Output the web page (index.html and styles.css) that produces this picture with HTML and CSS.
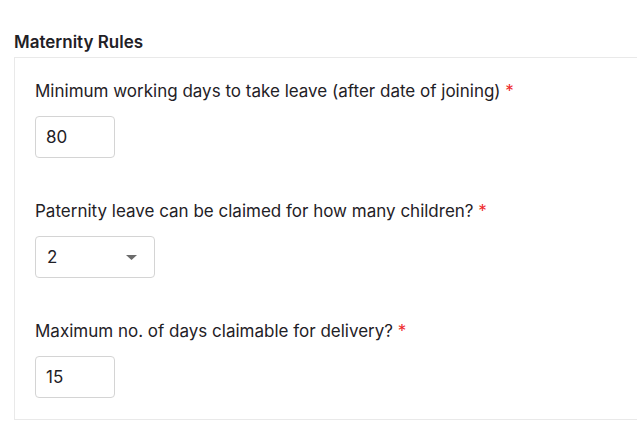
FILE: index.html
```html
<!DOCTYPE html>
<html>
<head>
<meta charset="utf-8">
<link rel="stylesheet" href="styles.css">
</head>
<body>
<div class="page">
  <h2 class="title">Maternity Rules</h2>
  <div class="card">
    <div class="field">
      <label class="label">Minimum working days to take leave (after date of joining) <span class="req">*</span></label>
      <div class="input">80</div>
    </div>
    <div class="field">
      <label class="label">Paternity leave can be claimed for how many children? <span class="req">*</span></label>
      <div class="select"><span>2</span><svg class="caret" width="11" height="5" viewBox="0 0 11 5"><path d="M0 0H11L5.5 5Z" fill="#6b6b6b"/></svg></div>
    </div>
    <div class="field">
      <label class="label">Maximum no. of days claimable for delivery? <span class="req">*</span></label>
      <div class="input">15</div>
    </div>
  </div>
</div>
</body>
</html>
```
FILE: styles.css
```css
html, body {
  margin: 0;
  padding: 0;
  background: #fff;
}
body {
  font-family: Inter, "Noto Sans", sans-serif;
  color: #1f2126;
}
.page {
  padding: 30px 0 0 14px;
}
.title {
  margin: 0 0 3px 0;
  font-size: 17px;
  line-height: 24px;
  font-weight: 600;
}
.card {
  border: 1px solid #e9e9e9;
  border-right: 0;
  padding: 21px 20px 21px 20px;
  display: flex;
  flex-direction: column;
  gap: 41px;
}
.field {
  display: flex;
  flex-direction: column;
  align-items: flex-start;
  gap: 13px;
}
.label {
  font-size: 17px;
  line-height: 24px;
}
.req {
  color: #ee2a2a;
}
.input, .select {
  box-sizing: border-box;
  height: 42px;
  border: 1px solid #d4d4d4;
  border-radius: 4px;
  font-size: 17px;
  display: flex;
  align-items: center;
  padding-left: 10px;
}
.input {
  width: 80px;
}
.select {
  width: 120px;
  justify-content: space-between;
  padding-right: 17px;
  padding-left: 11px;
}
.caret {
  display: block;
}
```
